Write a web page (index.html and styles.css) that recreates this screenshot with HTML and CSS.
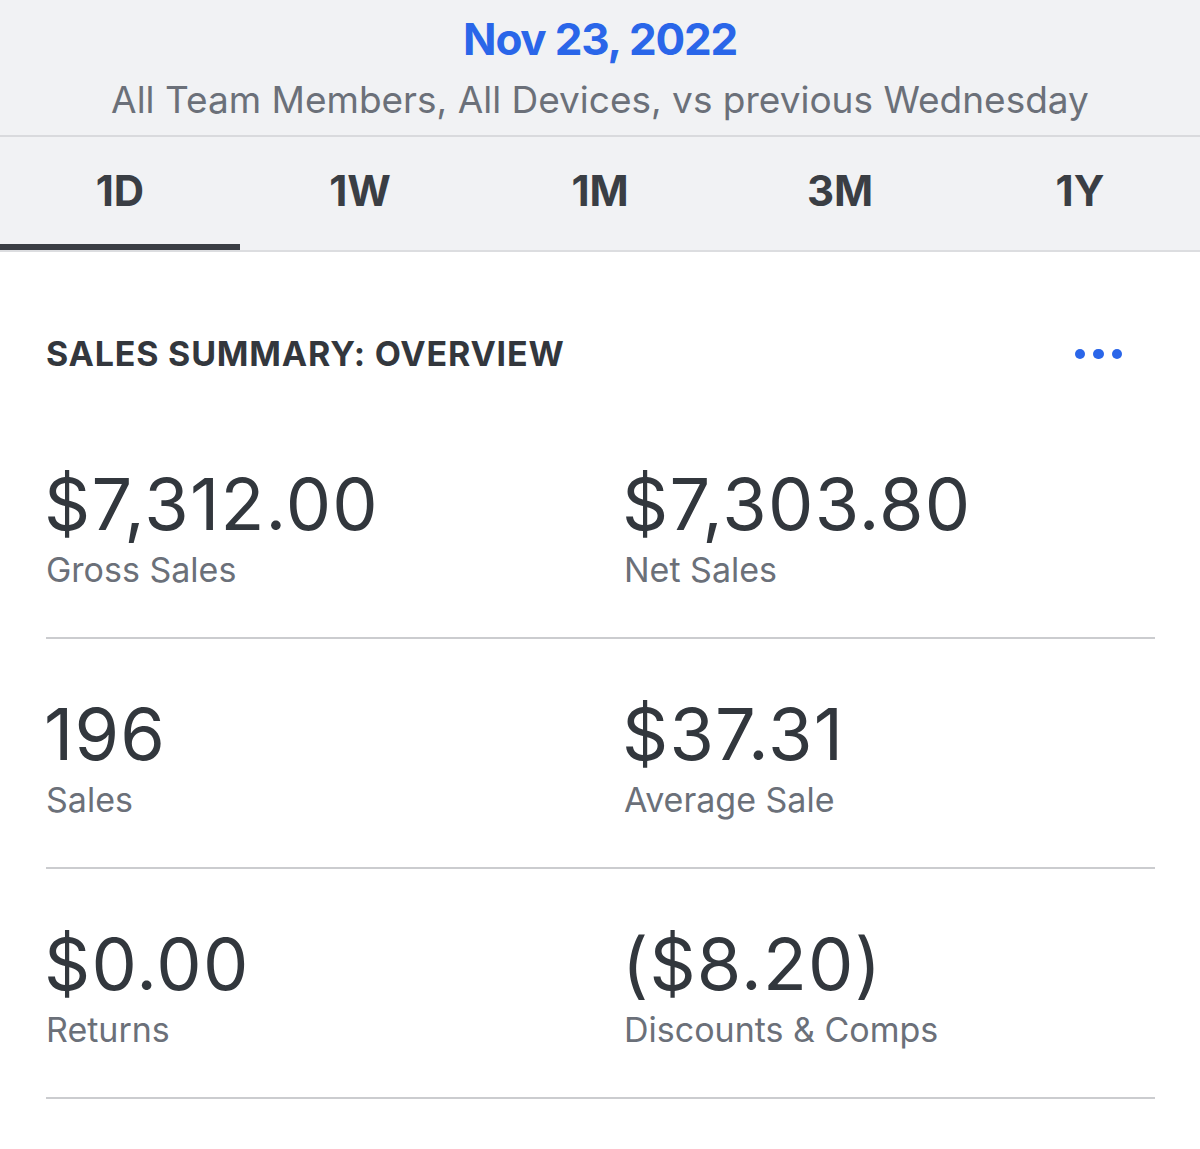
FILE: index.html
```html
<!DOCTYPE html>
<html lang="en">
<head>
<meta charset="utf-8">
<title>Sales Summary</title>
<link rel="stylesheet" href="styles.css">
</head>
<body>
<header class="report-header">
  <div class="report-date">Nov 23, 2022</div>
  <div class="report-filters">All Team Members, All Devices, vs previous Wednesday</div>
</header>
<nav class="range-tabs">
  <div class="range-tab active">1D</div>
  <div class="range-tab">1W</div>
  <div class="range-tab">1M</div>
  <div class="range-tab">3M</div>
  <div class="range-tab">1Y</div>
</nav>
<main class="summary">
  <div class="summary-head">
    <h2 class="summary-title">SALES SUMMARY: OVERVIEW</h2>
    <div class="more-dots" aria-label="More"><span></span><span></span><span></span></div>
  </div>
  <div class="metric-row">
    <div class="metric"><div class="metric-value">$7,312.00</div><div class="metric-label">Gross Sales</div></div>
    <div class="metric"><div class="metric-value">$7,303.80</div><div class="metric-label">Net Sales</div></div>
  </div>
  <div class="metric-row">
    <div class="metric"><div class="metric-value">196</div><div class="metric-label">Sales</div></div>
    <div class="metric"><div class="metric-value">$37.31</div><div class="metric-label">Average Sale</div></div>
  </div>
  <div class="metric-row">
    <div class="metric"><div class="metric-value">$0.00</div><div class="metric-label">Returns</div></div>
    <div class="metric"><div class="metric-value">($8.20)</div><div class="metric-label">Discounts &amp; Comps</div></div>
  </div>
</main>
</body>
</html>
```
FILE: styles.css
```css
* { box-sizing: border-box; }
html, body { margin: 0; padding: 0; }
body {
  width: 1200px;
  min-height: 1149px;
  background: #ffffff;
  font-family: Inter, "Liberation Sans", Arial, sans-serif;
  color: #33383e;
}
.report-header {
  background: #f1f2f4;
  text-align: center;
  padding: 9px 0 10px;
  border-bottom: 2px solid #d9dadd;
}
.report-date {
  font-size: 44px;
  line-height: 60px;
  font-weight: 700;
  letter-spacing: -1.2px;
  color: #2a66e9;
}
.report-filters {
  margin-top: 6px;
  font-size: 37px;
  line-height: 50px;
  color: #6b7079;
}
.range-tabs {
  display: grid;
  grid-template-columns: repeat(5, 1fr);
  background: #f1f2f4;
  border-bottom: 2px solid #dcdde0;
}
.range-tab {
  height: 113px;
  line-height: 107px;
  border-bottom: 6px solid transparent;
  text-align: center;
  font-size: 42px;
  font-weight: 700;
  letter-spacing: 0;
  color: #3a3e44;
}
.range-tab.active { border-bottom-color: #3a3e44; }
.summary { padding: 82px 45px 0 46px; }
.summary-head {
  display: flex;
  align-items: center;
  justify-content: space-between;
  margin-bottom: 35px;
}
.summary-title {
  margin: 0;
  font-size: 34px;
  line-height: 40px;
  font-weight: 700;
  letter-spacing: 0.8px;
  color: #33373d;
}
.more-dots {
  display: flex;
  gap: 8px;
  margin-right: 33px;
}
.more-dots span {
  width: 10.5px;
  height: 10.5px;
  border-radius: 50%;
  background: #2a66e9;
}
.metric-row {
  display: grid;
  grid-template-columns: 578px 1fr;
  padding: 55px 0 47px;
  border-bottom: 2px solid #cbcccf;
}
.metric-value {
  font-size: 72px;
  line-height: 80px;
  letter-spacing: 1.2px;
  margin-left: -2px;
  color: #32373d;
}
.metric-label {
  margin-top: 6px;
  font-size: 34px;
  line-height: 40px;
  color: #6b7079;
}
```
